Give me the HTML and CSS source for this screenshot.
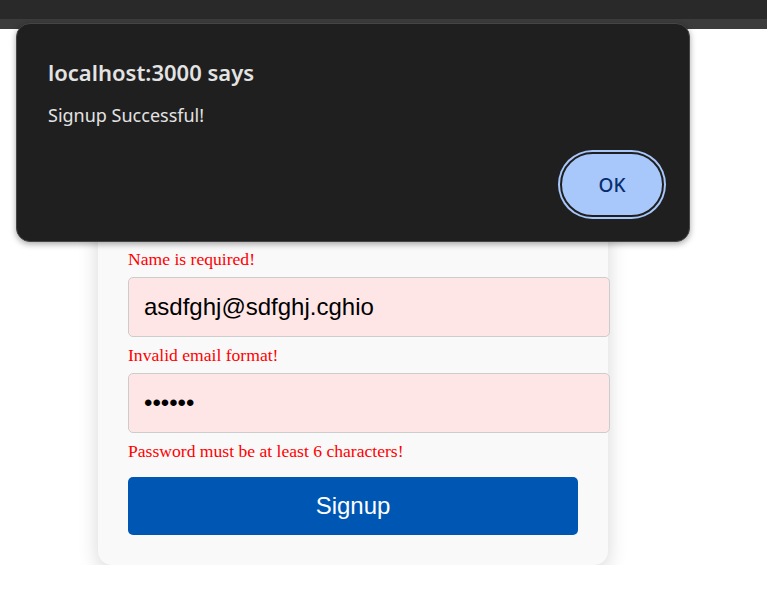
FILE: index.html
```html
<!DOCTYPE html>
<html lang="en">
<head>
<meta charset="utf-8">
<title>Signup</title>
<link rel="stylesheet" href="styles.css">
</head>
<body>
<div class="chrome">
  <div class="chrome-top"></div>
  <div class="chrome-band"></div>
</div>
<main class="page">
  <form class="card">
    <h2 class="card-title">Signup</h2>
    <input class="field" type="text" value="">
    <span class="error">Name is required!</span>
    <input class="field" type="email" value="asdfghj@sdfghj.cghio">
    <span class="error">Invalid email format!</span>
    <input class="field" type="password" value="123456">
    <span class="error">Password must be at least 6 characters!</span>
    <button class="submit" type="button">Signup</button>
  </form>
</main>
<div class="dialog" role="alertdialog">
  <div class="dialog-title">localhost:3000 says</div>
  <div class="dialog-msg">Signup Successful!</div>
  <div class="dialog-actions">
    <button class="dialog-ok" type="button">OK</button>
  </div>
</div>
</body>
</html>
```

FILE: styles.css
```css
html, body {
  margin: 0;
  padding: 0;
  background: #ffffff;
}

.chrome-top {
  height: 19px;
  background: #292929;
}

.chrome-band {
  height: 10px;
  background: #3c3c3c;
}

.page {
  padding: 72px 0 0 98px;
}

.card {
  width: 450px;
  padding: 30px;
  background: #f9f9f9;
  border-radius: 14px;
  box-shadow: 0 6px 20px rgba(0, 0, 0, 0.16);
}

.card-title {
  margin: 0 0 20px;
  height: 30px;
  line-height: 30px;
  font-family: "Liberation Sans", Arial, sans-serif;
  font-size: 24px;
  text-align: center;
}

.field {
  display: block;
  width: 100%;
  margin: 0;
  padding: 15px;
  font-family: "Liberation Sans", Arial, sans-serif;
  font-size: 24px;
  line-height: 28px;
  height: 28px;
  color: #000;
  background: #ffe6e6;
  border: 1px solid #cccccc;
  border-radius: 5px;
  outline: none;
}

.error {
  display: block;
  margin: 8px 0 8px;
  font-family: "Liberation Serif", "Times New Roman", serif;
  font-size: 17.6px;
  line-height: 20px;
  color: #ff0000;
}

.submit {
  display: block;
  width: 100%;
  margin-top: 16px;
  padding: 15px;
  font-family: "Liberation Sans", Arial, sans-serif;
  font-size: 24px;
  line-height: 28px;
  color: #ffffff;
  background: #0056b3;
  border: none;
  border-radius: 5px;
}

.dialog {
  position: absolute;
  left: 16px;
  top: 23px;
  width: 674px;
  height: 219px;
  box-sizing: border-box;
  padding: 33px 23px 22px 31px;
  background: #1f1f1f;
  border: 1px solid #454545;
  border-radius: 14px;
  box-shadow: 0 2px 6px rgba(0, 0, 0, 0.35);
  font-family: "Noto Sans", "Open Sans", sans-serif;
  color: #e3e3e3;
  display: flex;
  flex-direction: column;
}

.dialog-title {
  font-size: 22px;
  font-weight: 600;
  line-height: 30px;
}

.dialog-msg {
  margin-top: 16px;
  font-size: 18px;
  line-height: 24px;
}

.dialog-actions {
  margin-top: auto;
  display: flex;
  justify-content: flex-end;
}

.dialog-ok {
  width: 104px;
  height: 65px;
  margin: 2px;
  border: 2px solid #1f1f1f;
  border-radius: 34px;
  background: #a8c7fa;
  box-shadow: 0 0 0 2px #a8c7fa;
  color: #062e6f;
  font-family: "Noto Sans", "Open Sans", sans-serif;
  font-size: 19px;
  font-weight: 500;
}
```
